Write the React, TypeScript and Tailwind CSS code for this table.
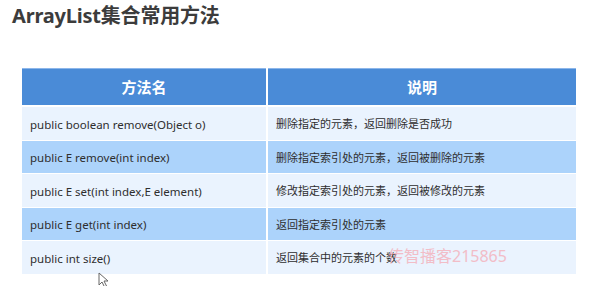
import React from 'react';

const rows = [
  { name: 'public boolean remove(Object o)', desc: '删除指定的元素，返回删除是否成功', h: 'h-[33px]', bg: 'bg-[#eaf3fe]' },
  { name: 'public E remove(int index)', desc: '删除指定索引处的元素，返回被删除的元素', h: 'h-[32px]', bg: 'bg-[#acd3fb]' },
  { name: 'public E set(int index,E element)', desc: '修改指定索引处的元素，返回被修改的元素', h: 'h-[33px]', bg: 'bg-[#eaf3fe]' },
  { name: 'public E get(int index)', desc: '返回指定索引处的元素', h: 'h-[32px]', bg: 'bg-[#acd3fb]' },
  { name: 'public int size()', desc: '返回集合中的元素的个数', h: 'h-[33px]', bg: 'bg-[#eaf3fe]' },
];

const cjk = "font-['Noto_Sans','Noto_Sans_CJK_SC',sans-serif]";

export default function App() {
  return (
    <div className={`relative w-[613px] h-[286px] bg-white overflow-hidden ${cjk}`}>
      {/* Title */}
      <h1 className="pl-[12px] pt-[2px] text-[20px] leading-[28px] font-bold text-[#3c3c3c] tracking-[-0.2px]">
        ArrayList集合常用方法
      </h1>

      {/* Table */}
      <div className="ml-[22px] mt-[38px] w-[554px] flex flex-col gap-y-[1px]">
        <div className="grid grid-cols-[244px_1fr] gap-x-[2px] h-[37px] mb-[1px]">
          <div className="bg-[#4a8bd7] border-t border-[#8cb6ea] flex items-center justify-center text-white font-bold text-[15px]">
            方法名
          </div>
          <div className="bg-[#4a8bd7] border-t border-[#8cb6ea] flex items-center justify-center text-white font-bold text-[15px]">
            说明
          </div>
        </div>
        {rows.map((r) => (
          <div key={r.name} className={`grid grid-cols-[244px_1fr] gap-x-[2px] ${r.h}`}>
            <div className={`${r.bg} flex items-center pl-[8px] pt-[2px] text-[11.5px] text-[#2e2e2e]`}>
              {r.name}
            </div>
            <div className={`${r.bg} flex items-center pl-[8px] pt-[2px] text-[11px] text-[#2e2e2e]`}>
              {r.desc}
            </div>
          </div>
        ))}
      </div>

      {/* Watermark */}
      <div className="absolute left-[388px] top-[245px] text-[16px] leading-[22px] text-[#f4b0ba] opacity-80 pointer-events-none">
        传智播客215865
      </div>

      {/* Mouse cursor */}
      <svg className="absolute left-[98px] top-[272px]" width="12" height="16" viewBox="0 0 12 16">
        <path d="M1 1 L1 13 L4 10 L6.5 15 L8.5 14 L6 9 L10 9 Z" fill="#fff" stroke="#666" strokeWidth="1" strokeLinejoin="round" />
      </svg>
    </div>
  );
}
